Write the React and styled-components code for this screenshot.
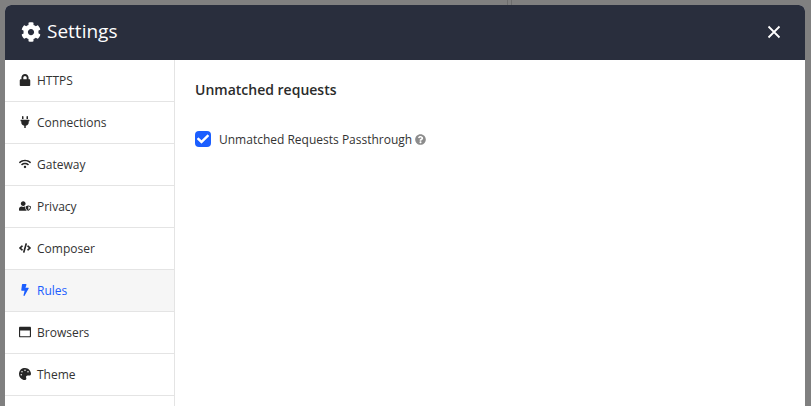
import React from 'react';
import styled, { createGlobalStyle } from 'styled-components';
import {
  FaLock, FaPlug, FaWifi, FaUserShield, FaCode, FaBolt,
  FaRegWindowMaximize, FaPalette, FaCog, FaQuestionCircle, FaCheck,
} from 'react-icons/fa';

const GlobalStyle = createGlobalStyle`
  * { box-sizing: border-box; }
  body {
    margin: 0;
    overflow: hidden;
    font-family: "Open Sans", sans-serif;
    font-size: 12px;
    color: #333;
  }
`;

const Backdrop = styled.div`
  height: 406px;
  padding: 5px 6px 0 5px;
  overflow: hidden;
  background: linear-gradient(#6e6e6e, #6e6e6e) 507px 0 / 1px 5px no-repeat,
    linear-gradient(#6e6e6e, #6e6e6e) 511px 0 / 1px 5px no-repeat, #808080;
`;

const Dialog = styled.section`
  display: flex;
  flex-direction: column;
  height: 430px;
  border-radius: 6px;
  overflow: hidden;
  background: #fff;
`;

const Header = styled.header`
  display: flex;
  align-items: center;
  flex: 0 0 55px;
  padding: 0 24px 2px 16px;
  background: #292e3d;
  color: #fff;
`;

const Title = styled.h1`
  flex: 1;
  margin: -2px 0 0 6px;
  font-size: 19px;
  font-weight: 400;
  line-height: 28px;
`;

const CloseButton = styled.button`
  display: flex;
  padding: 0;
  border: 0;
  background: none;
  color: inherit;
`;

const Body = styled.div`
  display: flex;
  flex: 1;
`;

const Sidebar = styled.nav`
  flex: 0 0 170px;
  border-right: 1px solid #e4e4e4;
`;

const NavItem = styled.a`
  display: flex;
  align-items: center;
  gap: 6px;
  height: 42px;
  padding-left: 14px;
  border-bottom: 1px solid #e4e4e4;
  background: ${({ $active }) => ($active ? '#f6f6f6' : '#fff')};
  color: ${({ $active }) => ($active ? '#1b5eff' : '#333')};
`;

const IconSlot = styled.span`
  display: flex;
  justify-content: center;
  width: 12px;
  margin-bottom: 1px;
  color: ${({ $active }) => ($active ? '#1b5eff' : '#262626')};
`;

const Content = styled.main`
  padding: 20px;
`;

const SectionTitle = styled.h2`
  margin: 0;
  font-size: 14px;
  font-weight: 600;
  line-height: 20px;
  color: #2b2b2b;
`;

const Option = styled.label`
  display: flex;
  align-items: center;
  height: 18px;
  margin-top: 30px;
`;

const Checkbox = styled.span`
  display: flex;
  align-items: center;
  justify-content: center;
  width: 16px;
  height: 16px;
  margin-right: 8px;
  border-radius: 4px;
  background: #1b5eff;
  color: #fff;
`;

const Hint = styled.span`
  display: flex;
  margin-left: 3px;
  color: #8c8c8c;
`;

const items = [
  ['HTTPS', FaLock],
  ['Connections', FaPlug],
  ['Gateway', FaWifi],
  ['Privacy', FaUserShield],
  ['Composer', FaCode],
  ['Rules', FaBolt],
  ['Browsers', FaRegWindowMaximize],
  ['Theme', FaPalette],
  ['', null],
];

export default function App() {
  return (
    <>
      <GlobalStyle />
      <Backdrop>
        <Dialog>
          <Header>
            <FaCog size={20} />
            <Title>Settings</Title>
            <CloseButton aria-label="Close">
              <svg width="14" height="14" viewBox="0 0 14 14" stroke="currentColor" strokeWidth="1.8">
                <path d="M1.5 1.5l11 11M12.5 1.5l-11 11" />
              </svg>
            </CloseButton>
          </Header>
          <Body>
            <Sidebar>
              {items.map(([label, Icon]) => (
                <NavItem key={label} $active={label === 'Rules'}>
                  <IconSlot $active={label === 'Rules'}>{Icon && <Icon size={12} />}</IconSlot>
                  {label}
                </NavItem>
              ))}
            </Sidebar>
            <Content>
              <SectionTitle>Unmatched requests</SectionTitle>
              <Option>
                <Checkbox><FaCheck size={12} /></Checkbox>
                Unmatched Requests Passthrough
                <Hint><FaQuestionCircle size={11} /></Hint>
              </Option>
            </Content>
          </Body>
        </Dialog>
      </Backdrop>
    </>
  );
}
